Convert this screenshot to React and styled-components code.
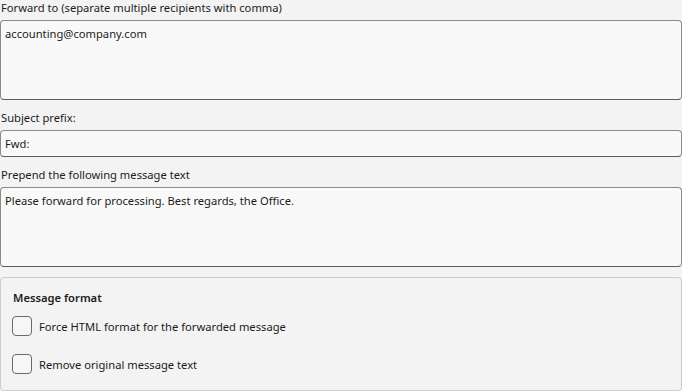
import React, { useState } from "react";
import styled, { createGlobalStyle } from "styled-components";

const GlobalStyle = createGlobalStyle`
  html, body {
    margin: 0;
    padding: 0;
    background: #f3f3f3;
  }
  body {
    font-family: "Noto Sans", "Open Sans", sans-serif;
    color: #1b1b1b;
  }
`;

const Page = styled.div`
  width: 682px;
  height: 391px;
  display: flex;
  flex-direction: column;
  box-sizing: border-box;
  overflow: hidden;
`;

const Label = styled.label`
  display: block;
  font-size: 11.2px;
  line-height: 16px;
  height: 16px;
  padding-left: 1px;
  margin-bottom: 4px;
  color: #1b1b1b;
`;

const Field = styled.div`
  display: flex;
  flex-direction: column;
  margin-bottom: ${(props) => props.gap || 10}px;
`;

const fieldBox = `
  box-sizing: border-box;
  width: 682px;
  margin: 0;
  border: 1px solid #8a8a8a;
  border-bottom-color: #5c5c5c;
  border-radius: 4px;
  background: #f9f9f9;
  font-family: "Noto Sans", "Open Sans", sans-serif;
  font-size: 11.2px;
  color: #1b1b1b;
  outline: none;
`;

const TextArea = styled.textarea`
  ${fieldBox}
  height: ${(props) => props.h || 80}px;
  padding: 5px 4px;
  line-height: 16px;
  resize: none;
`;

const TextInput = styled.input`
  ${fieldBox}
  height: 27px;
  padding: 0 4px;
  line-height: 16px;
`;

const Group = styled.fieldset`
  box-sizing: border-box;
  width: 682px;
  height: 114px;
  margin: 0;
  padding: 12px 11px 0;
  border: 1px solid #cccccc;
  border-radius: 4px;
  background: #f3f3f3;
  display: flex;
  flex-direction: column;
`;

const GroupTitle = styled.div`
  font-size: 11.2px;
  font-weight: 600;
  line-height: 16px;
  margin-left: 1px;
  margin-bottom: 10px;
`;

const CheckRow = styled.label`
  display: flex;
  align-items: center;
  gap: 7px;
  height: 20px;
  margin-bottom: 18px;
  font-size: 11.2px;
  cursor: pointer;
`;

const Box = styled.input`
  appearance: none;
  -webkit-appearance: none;
  box-sizing: border-box;
  width: 20px;
  height: 20px;
  margin: 0;
  border: 1px solid #6a6a6a;
  border-radius: 4px;
  background: #f6f6f6;
  flex-shrink: 0;
  &:checked {
    background: #005fb8;
    border-color: #005fb8;
  }
`;

const App = () => {
  const [forceHtml, setForceHtml] = useState(false);
  const [removeOriginal, setRemoveOriginal] = useState(false);

  return (
    <Page>
      <GlobalStyle />
      <Field gap={10}>
        <Label>Forward to (separate multiple recipients with comma)</Label>
        <TextArea h={80} defaultValue="accounting@company.com" />
      </Field>
      <Field gap={10}>
        <Label>Subject prefix:</Label>
        <TextInput defaultValue="Fwd:" />
      </Field>
      <Field gap={10}>
        <Label>Prepend the following message text</Label>
        <TextArea
          h={80}
          defaultValue="Please forward for processing. Best regards, the Office."
        />
      </Field>
      <Group>
        <GroupTitle>Message format</GroupTitle>
        <CheckRow>
          <Box
            type="checkbox"
            checked={forceHtml}
            onChange={(e) => setForceHtml(e.target.checked)}
          />
          Force HTML format for the forwarded message
        </CheckRow>
        <CheckRow>
          <Box
            type="checkbox"
            checked={removeOriginal}
            onChange={(e) => setRemoveOriginal(e.target.checked)}
          />
          Remove original message text
        </CheckRow>
      </Group>
    </Page>
  );
};

export default App;
